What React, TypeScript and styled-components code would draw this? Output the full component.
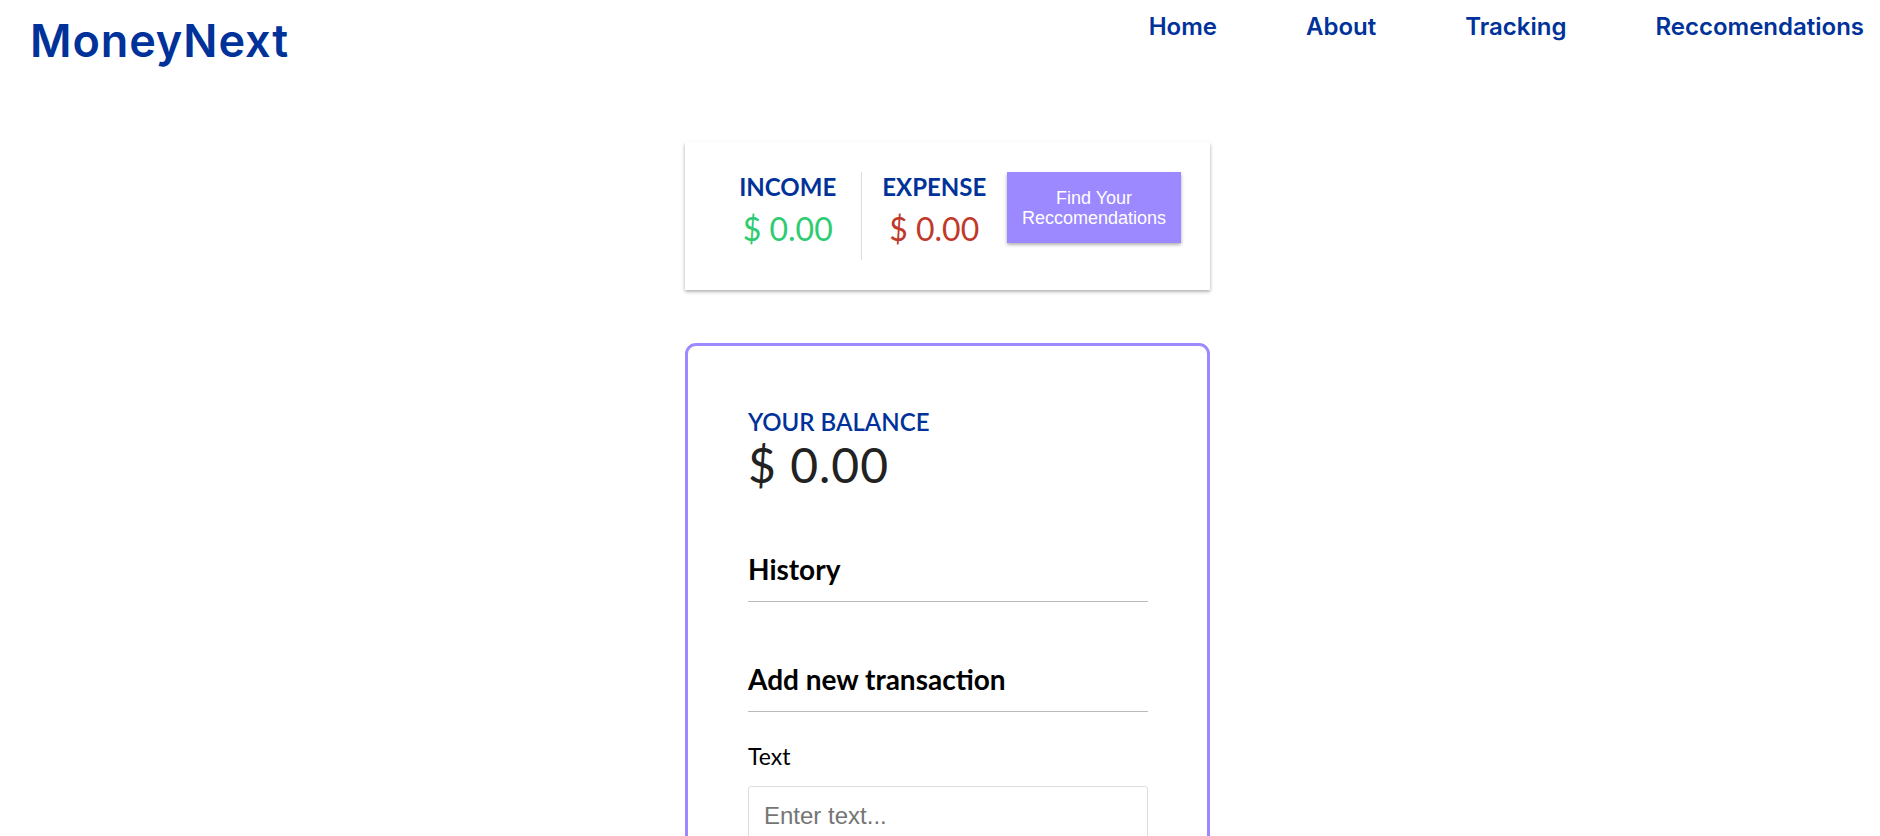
import styled, { createGlobalStyle } from "styled-components"

const NAVY = "#00329a"
const PURPLE = "#9c88ff"

const GlobalStyle = createGlobalStyle`
	* {
		box-sizing: border-box;
	}
	body {
		margin: 0;
		background-color: #fff;
		font-family: Lato, "Noto Sans", sans-serif;
		color: #222;
	}
`

const Header = styled.header`
	display: flex;
	justify-content: space-between;
	align-items: flex-start;
	height: 112px;
	padding: 0 16px 0 30px;
`

const Logo = styled.div`
	padding-top: 18px;
	font-family: Inter, "Noto Sans", sans-serif;
	font-size: 45px;
	font-weight: 600;
	line-height: 1;
	letter-spacing: 0.9px;
	color: ${NAVY};
`

const Nav = styled.nav`
	display: flex;
	gap: 89px;
	padding-top: 15px;
`

const NavLink = styled.a`
	font-family: Inter, "Noto Sans", sans-serif;
	font-size: 24px;
	font-weight: 600;
	line-height: 1;
	color: ${NAVY};
	text-decoration: none;
	cursor: pointer;
`

const Main = styled.main`
	display: flex;
	justify-content: center;
	padding-left: 15px;
`

const Column = styled.div`
	width: 525px;
	margin-top: 30px;
`

const SummaryCard = styled.div`
	display: flex;
	align-items: flex-start;
	padding: 30px 29px 30px 30px;
	background-color: #fff;
	box-shadow: 0 1.5px 4.5px rgba(0, 0, 0, 0.12), 0 1.5px 3px rgba(0, 0, 0, 0.24);
`

const Stat = styled.div<{ $divider?: boolean }>`
	flex: 1;
	min-height: 88px;
	text-align: center;
	border-left: ${({ $divider }) => ($divider ? "1px solid #dedede" : "none")};
`

const Label = styled.h4<{ $weight?: number }>`
	margin: 0;
	font-size: 24px;
	font-weight: ${({ $weight }) => $weight ?? 700};
	text-transform: uppercase;
	color: ${NAVY};
`

const Money = styled.p<{ $tone: "plus" | "minus" }>`
	margin: 7.5px 0;
	font-size: 32px;
	color: ${({ $tone }) => ($tone === "plus" ? "#2ecc71" : "#c0392b")};
`

const RecButton = styled.button`
	width: 174px;
	height: 71px;
	padding: 0 10px;
	border: 0;
	background-color: ${PURPLE};
	color: #fff;
	font-family: "Liberation Sans", Arial, sans-serif;
	font-size: 18px;
	line-height: 20px;
	box-shadow: 0 1.5px 4.5px rgba(0, 0, 0, 0.12), 0 1.5px 3px rgba(0, 0, 0, 0.24);
	cursor: pointer;
`

const BalanceCard = styled.div`
	margin-top: 53px;
	padding: 61px 59px 40px 60px;
	border: 3px solid ${PURPLE};
	border-radius: 11px;
	background-color: #fff;
`

const Balance = styled.h1`
	margin: 0;
	font-size: 48px;
	font-weight: 400;
	letter-spacing: 1px;
	line-height: 57.6px;
	color: #222;
`

const SectionTitle = styled.h3<{ $top: number }>`
	margin: ${({ $top }) => $top}px 0 15px;
	padding-bottom: 15px;
	border-bottom: 1px solid #bbb;
	font-size: 28px;
	font-weight: 700;
	color: #000;
`

const HistoryList = styled.ul`
	margin: 0;
	padding: 0;
	list-style: none;
`

const FieldLabel = styled.label`
	display: block;
	margin: 30px 0 16px;
	font-size: 23px;
	color: #000;
`

const TextInput = styled.input`
	display: block;
	width: 100%;
	padding: 15px;
	border: 1px solid #dedede;
	border-radius: 3px;
	font-family: "Liberation Sans", Arial, sans-serif;
	font-size: 24px;
	&::placeholder {
		color: #757575;
	}
`

export default function App() {
	return (<>
		<GlobalStyle/>
		<Header>
			<Logo>MoneyNext</Logo>
			<Nav>
				<NavLink>Home</NavLink>
				<NavLink>About</NavLink>
				<NavLink>Tracking</NavLink>
				<NavLink>Reccomendations</NavLink>
			</Nav>
		</Header>
		<Main>
			<Column>
				<SummaryCard>
					<Stat>
						<Label>Income</Label>
						<Money $tone="plus">$ 0.00</Money>
					</Stat>
					<Stat $divider>
						<Label>Expense</Label>
						<Money $tone="minus">$ 0.00</Money>
					</Stat>
					<RecButton>Find Your Reccomendations</RecButton>
				</SummaryCard>
				<BalanceCard>
					<Label $weight={600}>Your Balance</Label>
					<Balance>$ 0.00</Balance>
					<SectionTitle $top={58}>History</SectionTitle>
					<HistoryList/>
					<SectionTitle $top={60}>Add new transaction</SectionTitle>
					<form>
						<FieldLabel htmlFor="text">Text</FieldLabel>
						<TextInput id="text" type="text" placeholder="Enter text..."/>
					</form>
				</BalanceCard>
			</Column>
		</Main>
	</>)
}
